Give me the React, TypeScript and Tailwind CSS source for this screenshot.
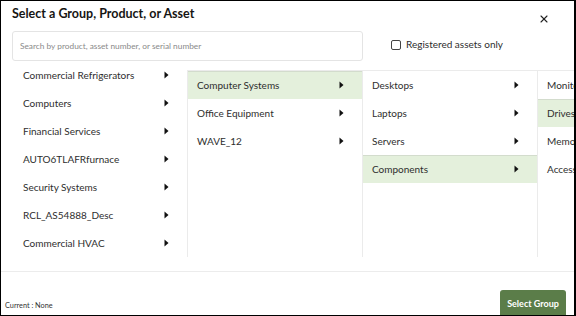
import { X } from 'lucide-react';

type Row = { label: string; active?: boolean; arrow?: boolean };

const col1: Row[] = [
  { label: 'Commercial Refrigerators' },
  { label: 'Computers' },
  { label: 'Financial Services' },
  { label: 'AUTO6TLAFRfurnace' },
  { label: 'Security Systems' },
  { label: 'RCL_AS54888_Desc' },
  { label: 'Commercial HVAC' },
];

const col2: Row[] = [
  { label: 'Computer Systems', active: true },
  { label: 'Office Equipment' },
  { label: 'WAVE_12' },
];

const col3: Row[] = [
  { label: 'Desktops' },
  { label: 'Laptops' },
  { label: 'Servers' },
  { label: 'Components', active: true },
];

const col4: Row[] = [
  { label: 'Monitors', arrow: false },
  { label: 'Drives', active: true, arrow: false },
  { label: 'Memory', arrow: false },
  { label: 'Accessories', arrow: false },
];

function Caret() {
  return (
    <svg width="5" height="8" viewBox="0 0 5 8" className="shrink-0">
      <path d="M0.5 0.5 L4.5 4 L0.5 7.5 Z" fill="#111" />
    </svg>
  );
}

function ListRow({ row, pad }: { row: Row; pad: string }) {
  return (
    <div
      className={`flex h-[28px] items-center justify-between whitespace-nowrap ${pad} ${
        row.active ? 'bg-[#e4f0dc] shadow-[inset_0_1px_0_#d3dccd]' : ''
      }`}
    >
      <span className="text-[10px] text-[#2e2e2e]">{row.label}</span>
      {row.arrow !== false && <Caret />}
    </div>
  );
}

export default function App() {
  return (
    <div
      className="relative flex h-[316px] w-[576px] flex-col overflow-hidden border border-r-2 border-black bg-white"
      style={{ fontFamily: 'Lato, "Open Sans", sans-serif' }}
    >
      <div className="flex items-start justify-between pl-[11px] pr-[24px] pt-[3px]">
        <h1 className="text-[12.5px] font-bold leading-[20px] text-[#161513]">Select a Group, Product, or Asset</h1>
        <X size={12} strokeWidth={2.2} className="mt-[9px] text-[#222]" />
      </div>

      <div className="mt-[6px] flex items-start pl-[11px]">
        <div className="flex h-[30px] w-[351px] items-center rounded-[3px] border border-[#e4e4e4] px-[7px]">
          <span className="text-[8.3px] text-[#8a8a8a]">Search by product, asset number, or serial number</span>
        </div>
        <label className="ml-[28px] mt-[6px] flex items-center gap-[5px]">
          <span className="h-[10px] w-[10px] rounded-[2px] border border-[#444]" />
          <span className="text-[10px] text-[#2e2e2e]">Registered assets only</span>
        </label>
      </div>

      <div className="flex h-[196px]">
        <div className="w-[186px] shrink-0 pl-[22px] pr-[18px]">
          {col1.map((r) => (
            <ListRow key={r.label} row={r} pad="" />
          ))}
        </div>
        <div className="mt-[9px] w-[175px] shrink-0 border-l border-t border-[#ebebeb]">
          {col2.map((r) => (
            <ListRow key={r.label} row={r} pad="pl-[9px] pr-[18px]" />
          ))}
        </div>
        <div className="mt-[9px] w-[175px] shrink-0 border-l border-t border-[#ebebeb]">
          {col3.map((r) => (
            <ListRow key={r.label} row={r} pad="pl-[9px] pr-[18px]" />
          ))}
        </div>
        <div className="mt-[9px] min-w-0 flex-1 overflow-hidden border-l border-t border-[#ebebeb]">
          {col4.map((r) => (
            <ListRow key={r.label} row={r} pad="pl-[9px]" />
          ))}
        </div>
      </div>

      <div className="mt-[14px] flex flex-1 items-end justify-between border-t border-[#ececec] pl-[4px] pr-[8px]">
        <span className="mb-[3px] text-[7.3px] text-[#333]">Current : None</span>
        <button className="-mb-[2px] h-[27px] w-[66px] rounded-[3px] bg-[#5b7d49] text-[9px] font-bold text-white">
          Select Group
        </button>
      </div>
    </div>
  );
}
